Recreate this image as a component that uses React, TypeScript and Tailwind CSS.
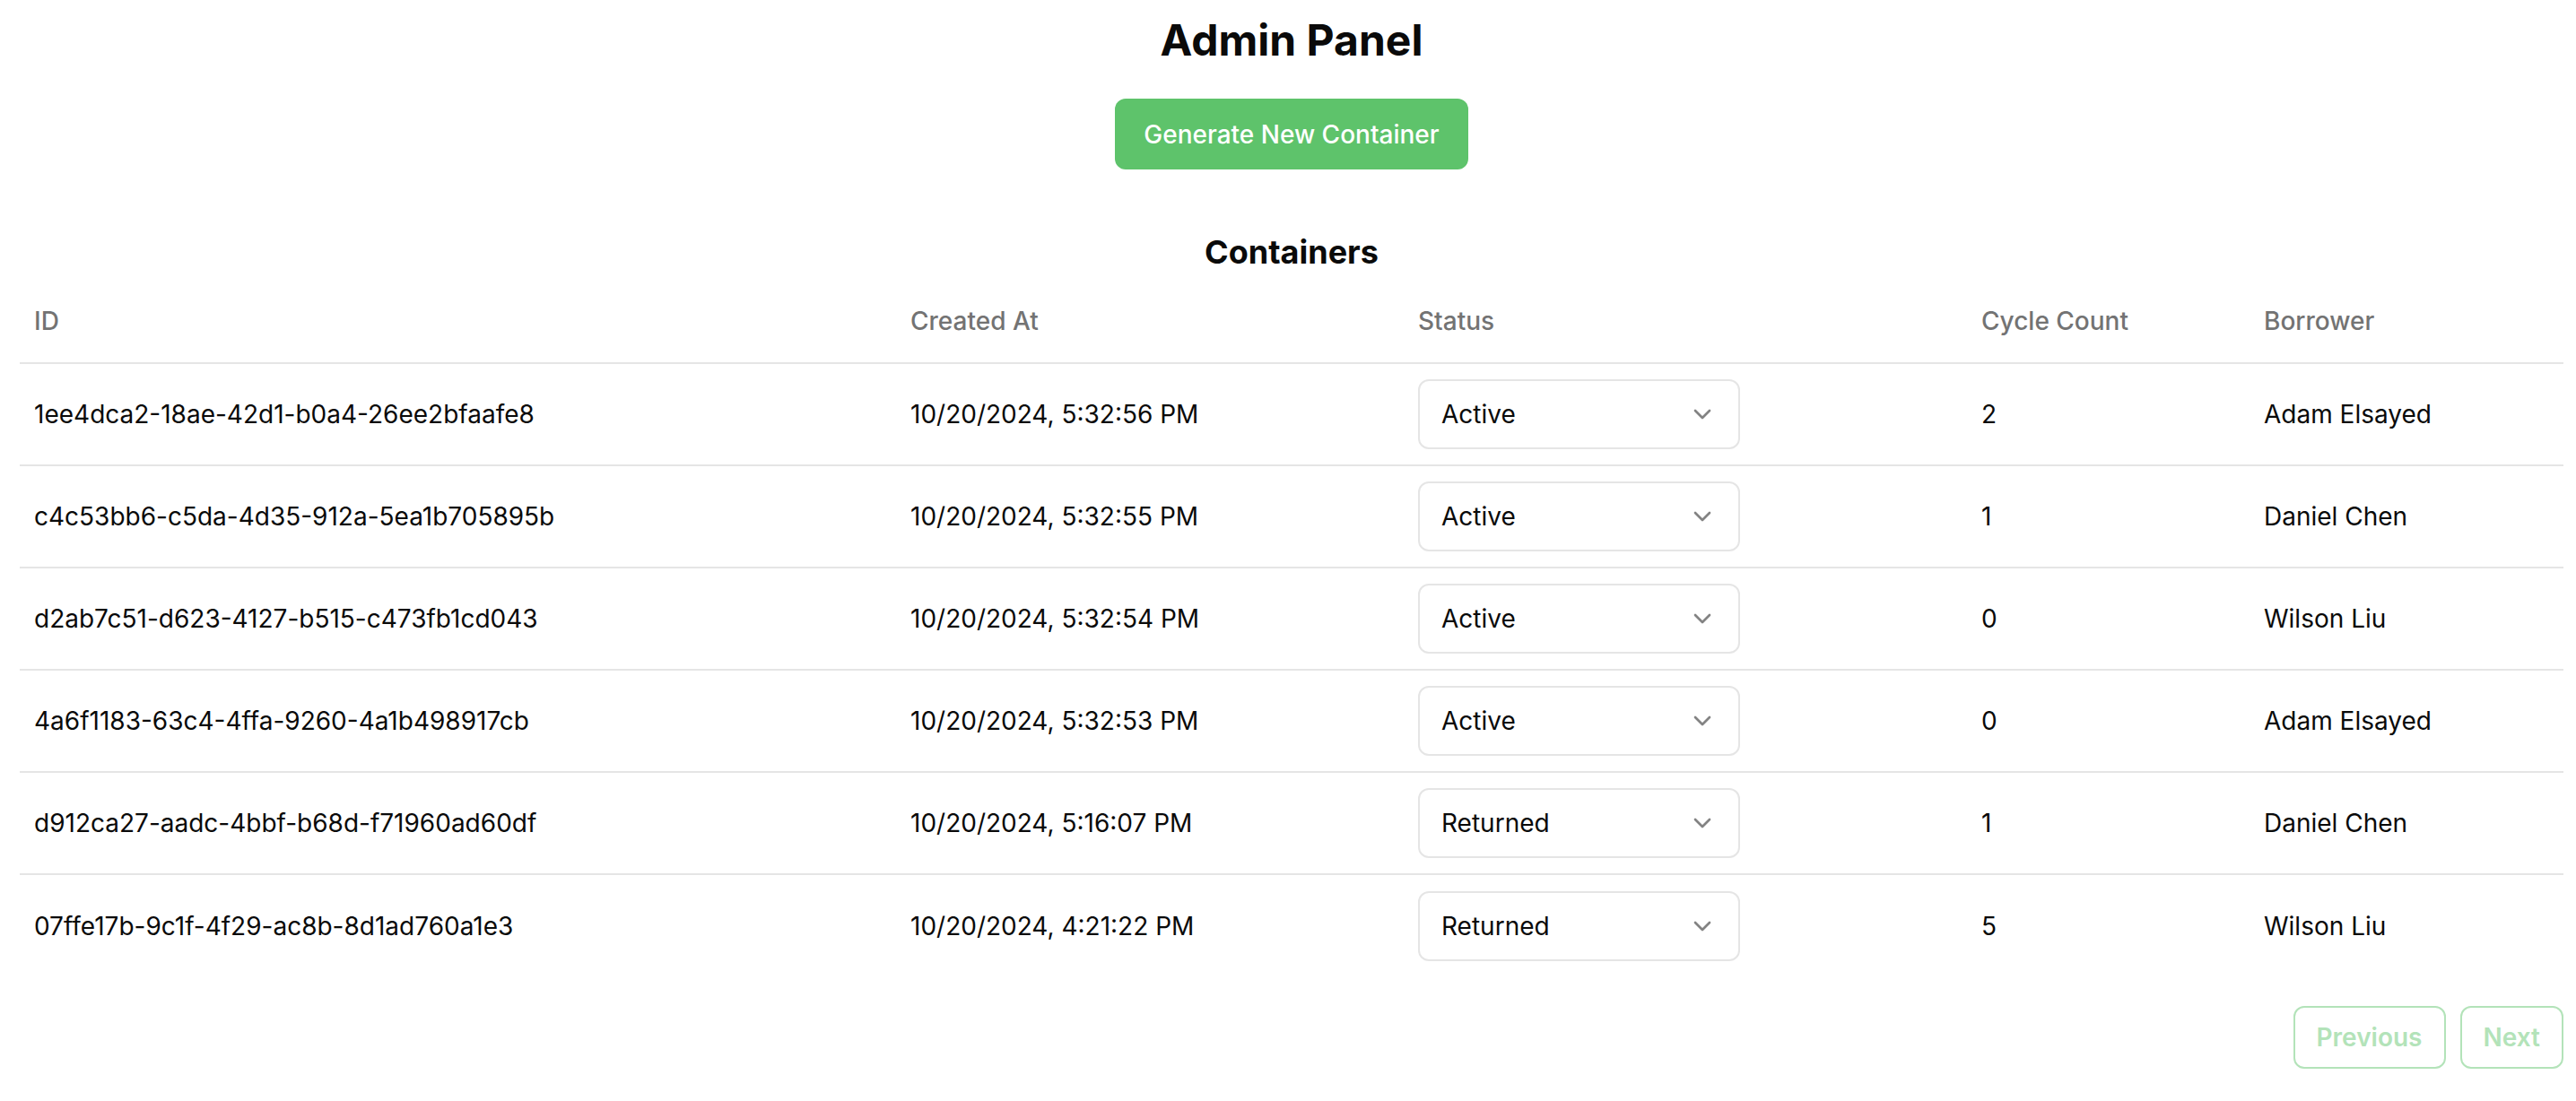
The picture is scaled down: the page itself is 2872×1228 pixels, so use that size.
import React from 'react';
import { ChevronDown } from 'lucide-react';

interface Container {
  id: string;
  createdAt: string;
  status: 'Active' | 'Returned';
  cycleCount: number;
  borrower: string;
}

const containers: Container[] = [
  { id: '1ee4dca2-18ae-42d1-b0a4-26ee2bfaafe8', createdAt: '10/20/2024, 5:32:56 PM', status: 'Active', cycleCount: 2, borrower: 'Adam Elsayed' },
  { id: 'c4c53bb6-c5da-4d35-912a-5ea1b705895b', createdAt: '10/20/2024, 5:32:55 PM', status: 'Active', cycleCount: 1, borrower: 'Daniel Chen' },
  { id: 'd2ab7c51-d623-4127-b515-c473fb1cd043', createdAt: '10/20/2024, 5:32:54 PM', status: 'Active', cycleCount: 0, borrower: 'Wilson Liu' },
  { id: '4a6f1183-63c4-4ffa-9260-4a1b498917cb', createdAt: '10/20/2024, 5:32:53 PM', status: 'Active', cycleCount: 0, borrower: 'Adam Elsayed' },
  { id: 'd912ca27-aadc-4bbf-b68d-f71960ad60df', createdAt: '10/20/2024, 5:16:07 PM', status: 'Returned', cycleCount: 1, borrower: 'Daniel Chen' },
  { id: '07ffe17b-9c1f-4f29-ac8b-8d1ad760a1e3', createdAt: '10/20/2024, 4:21:22 PM', status: 'Returned', cycleCount: 5, borrower: 'Wilson Liu' },
];

const cols = 'grid grid-cols-[977px_566px_628px_315px_1fr] items-center';

const StatusSelect: React.FC<{ value: string }> = ({ value }) => (
  <button
    type="button"
    className="flex h-[78px] w-[359px] items-center justify-between rounded-[12px] border-2 border-[#e5e5e5] bg-white px-[24px] text-left text-[28px] text-[#0a0a0a]"
  >
    <span>{value}</span>
    <ChevronDown className="h-[32px] w-[32px] text-[#0a0a0a] opacity-50" strokeWidth={2} />
  </button>
);

const App: React.FC = () => {
  return (
    <div className="min-h-screen bg-white pl-[22px] pr-[14px] pt-[13px] font-['Inter','Liberation_Sans',sans-serif] text-[#0a0a0a]">
      <h1 className="text-center text-[48px] font-bold leading-[64px]">Admin Panel</h1>
      <div className="mt-[33px] flex justify-center">
        <button
          type="button"
          className="h-[79px] rounded-[12px] bg-[#5ec36b] px-[32px] text-[28px] font-medium text-white"
        >
          Generate New Container
        </button>
      </div>

      <h2 className="mt-[64px] text-center text-[36px] font-bold leading-[56px]">Containers</h2>

      <div className="w-full text-[28px]">
        <div className={`${cols} h-[97px] border-b-2 border-[#e5e5e5] pt-[2px] font-medium text-[#737373]`}>
          <div className="px-[16px]">ID</div>
          <div className="px-[16px]">Created At</div>
          <div className="px-[16px]">Status</div>
          <div className="px-[16px]">Cycle Count</div>
          <div className="px-[16px]">Borrower</div>
        </div>
        {containers.map((c, i) => (
          <div
            key={c.id}
            className={`${cols} h-[114px] ${i < containers.length - 1 ? 'border-b-2 border-[#e5e5e5]' : ''}`}
          >
            <div className="px-[16px]">{c.id}</div>
            <div className="px-[16px]">{c.createdAt}</div>
            <div className="px-[16px]">
              <StatusSelect value={c.status} />
            </div>
            <div className="px-[16px]">{c.cycleCount}</div>
            <div className="px-[16px]">{c.borrower}</div>
          </div>
        ))}
      </div>

      <div className="flex justify-end gap-[16px] py-[32px]">
        <button
          type="button"
          disabled
          className="h-[70px] rounded-[12px] border-2 border-[#b3e3b9] bg-white px-[24px] text-[28px] font-semibold text-[#b3e3b9]"
        >
          Previous
        </button>
        <button
          type="button"
          disabled
          className="h-[70px] rounded-[12px] border-2 border-[#b3e3b9] bg-white px-[24px] text-[28px] font-semibold text-[#b3e3b9]"
        >
          Next
        </button>
      </div>
    </div>
  );
};

export default App;
